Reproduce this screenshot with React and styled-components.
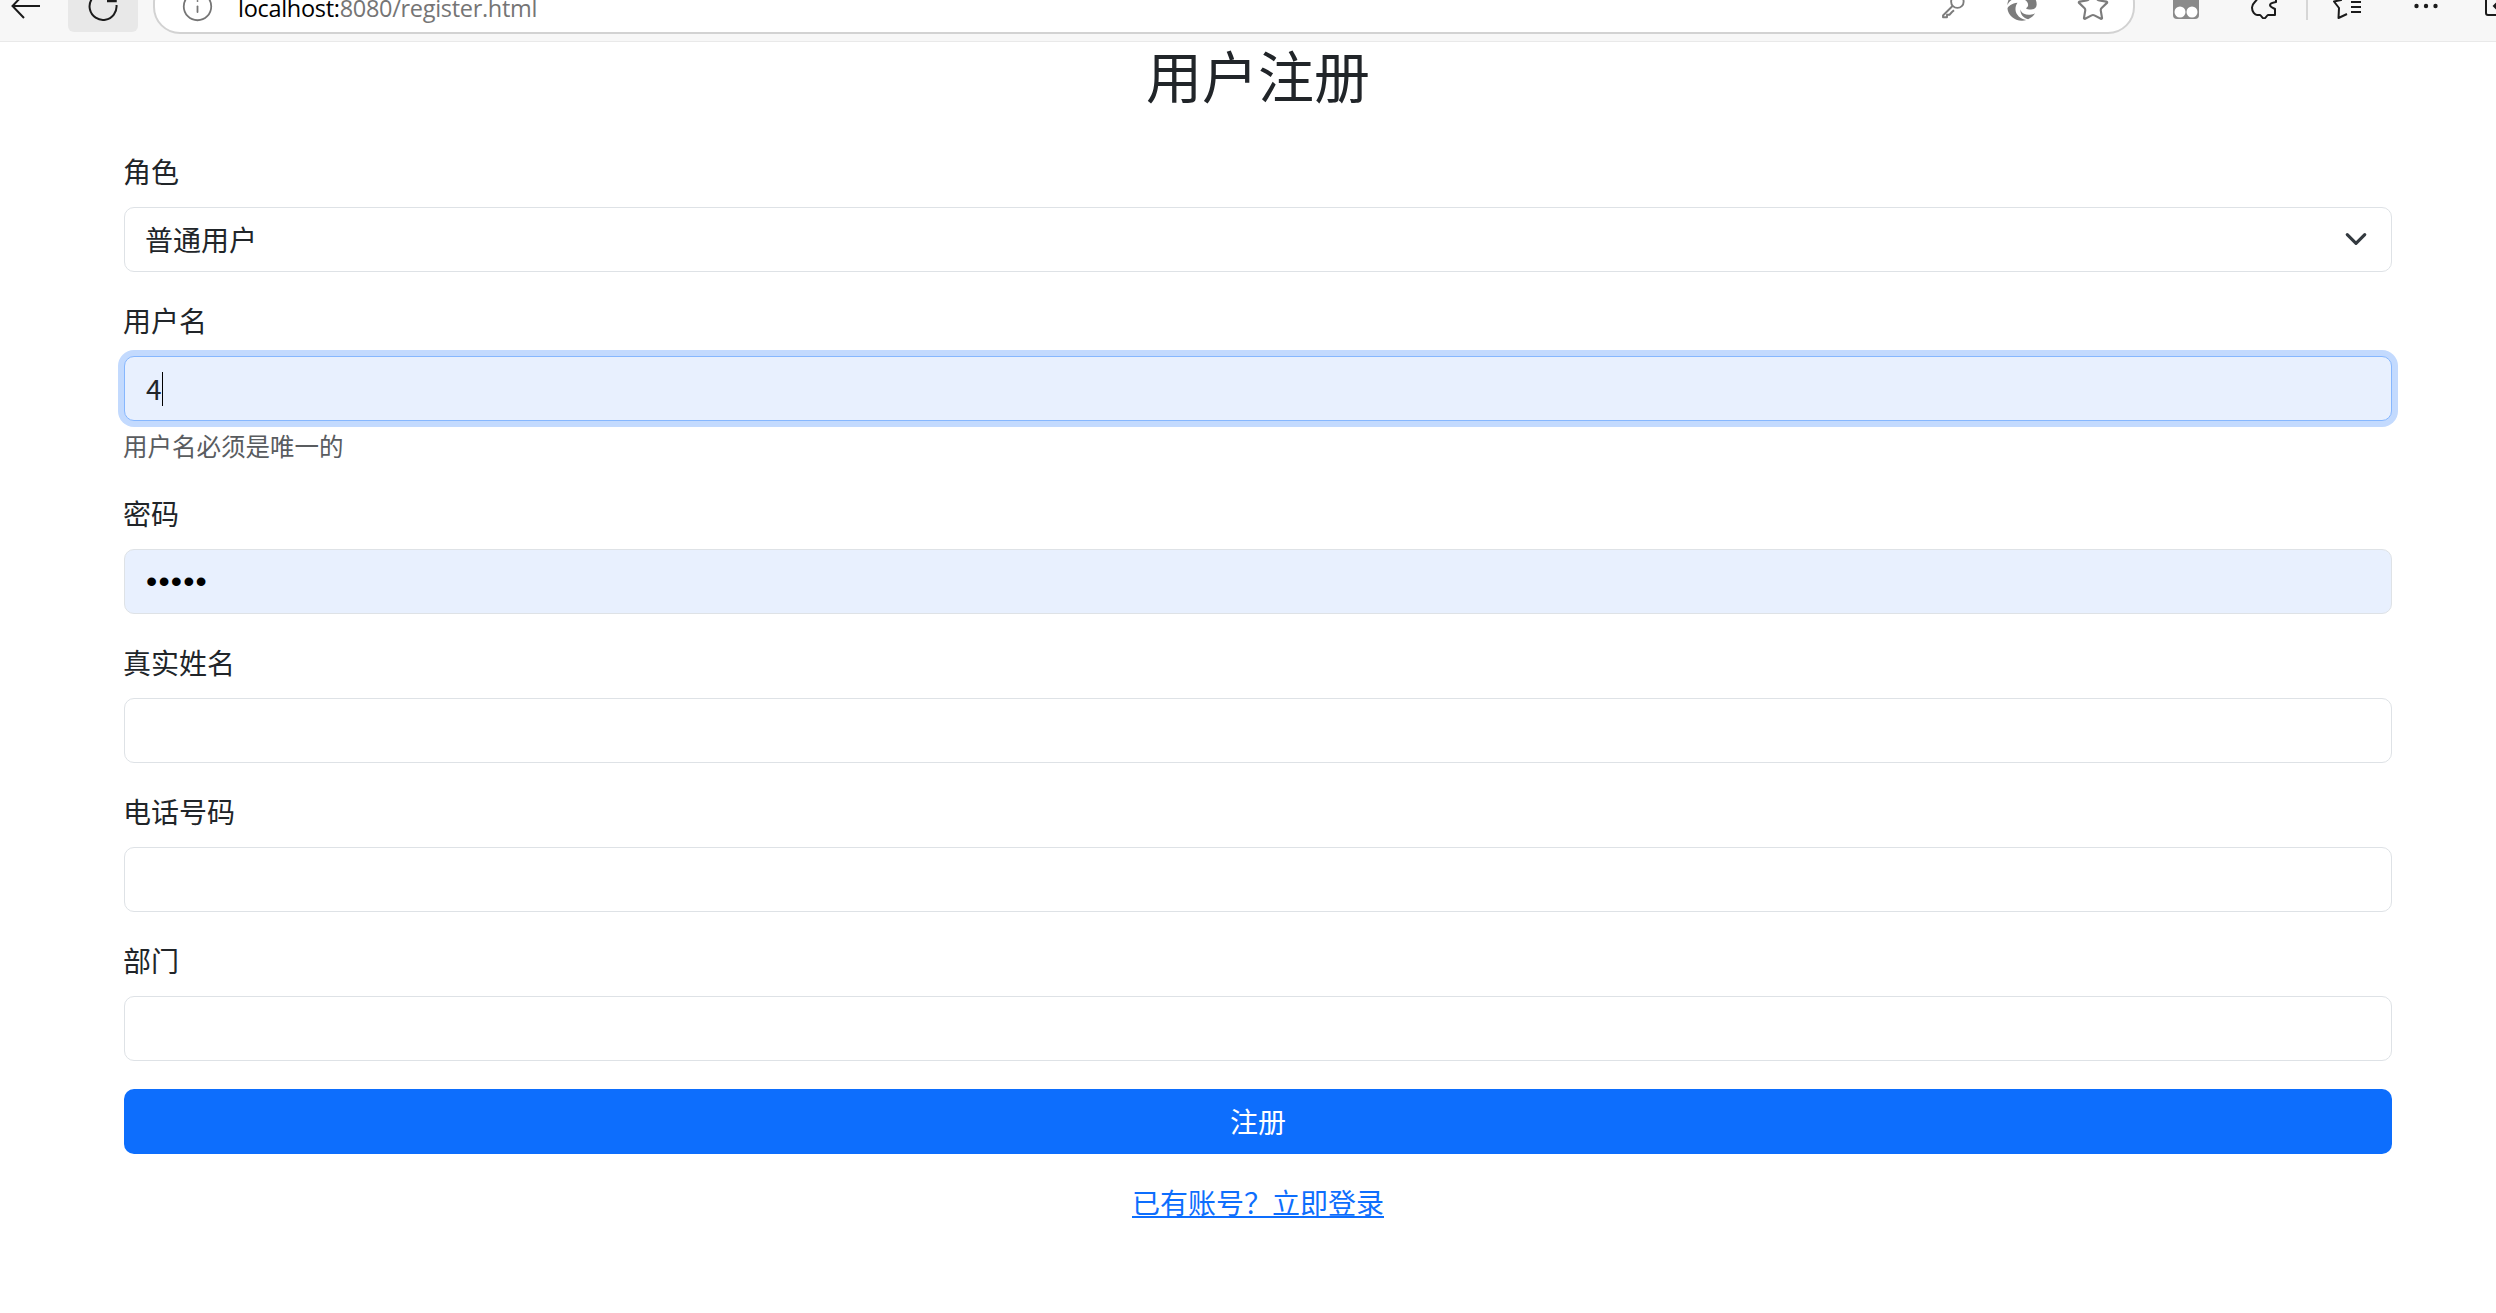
import React from 'react';
import styled, { createGlobalStyle } from 'styled-components';
import { Info, Star } from 'lucide-react';

const GlobalStyle = createGlobalStyle`
    html, body {
        margin: 0;
        padding: 0;
        background: #ffffff;
        color: #212529;
        font-family: 'Noto Sans CJK SC', 'Liberation Sans', sans-serif;
    }
`;

const Page = styled.div`
    width: 2496px;
    height: 1313px;
    overflow: hidden;
    background: #ffffff;
`;

/* browser chrome, cut off at the top of the capture */
const Toolbar = styled.header`
    height: 41px;
    box-sizing: content-box;
    background: #f7f7f7;
    border-bottom: 1px solid #e9e9e9;
    overflow: hidden;
`;
const ToolbarRow = styled.div`
    display: flex;
    align-items: center;
    height: 58px;
    margin-top: -24px;
    padding-left: 11px;
`;
const ToolButton = styled.div`
    flex: none;
    align-self: flex-start;
    display: flex;
    align-items: center;
    justify-content: center;
    box-sizing: border-box;
    width: ${(props) => props.$width || 70}px;
    height: 56px;
    padding-top: 4px;
    margin-left: ${(props) => props.$left || 0}px;
    border-radius: 6px;
    background: ${(props) => (props.$active ? '#e8e8e8' : 'transparent')};
    color: #1b1b1b;
`;
const AddressBar = styled.div`
    flex: none;
    display: flex;
    align-items: center;
    box-sizing: border-box;
    width: 1982px;
    height: 58px;
    margin-left: 15px;
    padding: 2px 23px 0 26px;
    background: #ffffff;
    border: 2px solid #d2d2d2;
    border-radius: 27px;
`;
const Url = styled.div`
    margin: 4px 0 0 24px;
    font-family: 'Open Sans', sans-serif;
    font-size: 23.5px;
    letter-spacing: -0.3px;
    white-space: nowrap;
    color: #757575;
    span {
        color: #000000;
    }
`;
const AddressIcons = styled.div`
    margin-left: auto;
    display: flex;
    align-items: center;
    gap: 38px;
    color: #7c7c7c;
`;
const Separator = styled.div`
    flex: none;
    width: 2px;
    height: 30px;
    margin-left: 7px;
    background: #d6d6d6;
`;

const Container = styled.main`
    padding: 0 104px 0 124px;
`;
const Title = styled.h2`
    margin: -2px 0 44px;
    font-size: 56px;
    line-height: 67px;
    font-weight: 400;
    text-align: center;
    color: #212529;
`;
const Group = styled.div`
    margin-bottom: 28px;
`;
const Label = styled.label`
    display: block;
    height: 42px;
    margin: 0 0 14px -1px;
    font-size: 28px;
    line-height: 40px;
`;
const Control = styled.input`
    display: block;
    box-sizing: border-box;
    width: 100%;
    height: 65px;
    padding: 0 21px 2px;
    font-family: inherit;
    font-size: 28px;
    color: #212529;
    background: ${(props) => (props.$filled ? '#e8f0fe' : '#ffffff')};
    border: 1.5px solid ${(props) => (props.$focused ? '#86b7fe' : '#dee2e6')};
    border-radius: 10px;
    outline: 0;
    box-shadow: ${(props) => (props.$focused ? '0 0 0 6px #c3dafe' : 'none')};
`;
const PasswordControl = styled(Control)`
    padding-bottom: 0;
    font-family: 'Liberation Sans', sans-serif;
    font-size: 32px;
    letter-spacing: 1.2px;
    color: #000000;
`;
const FieldWrap = styled.div`
    position: relative;
`;
const Caret = styled.span`
    position: absolute;
    left: 38px;
    top: 16px;
    width: 1px;
    height: 34px;
    background: #000000;
`;
const Select = styled.select`
    display: block;
    box-sizing: border-box;
    width: 100%;
    height: 65px;
    padding: 0 20px 2px;
    font-family: inherit;
    font-size: 28px;
    color: #212529;
    background: #ffffff;
    border: 1.5px solid #dee2e6;
    border-radius: 10px;
    outline: 0;
    appearance: none;
`;
const Chevron = styled.svg`
    position: absolute;
    right: 22px;
    top: 18px;
    width: 28px;
    height: 28px;
    pointer-events: none;
`;
const Hint = styled.div`
    height: 37px;
    margin: 7px 0 0 -1px;
    font-size: 24.5px;
    line-height: 35px;
    color: #595c5f;
`;
const Submit = styled.button`
    display: block;
    width: 100%;
    height: 65px;
    padding: 0 0 2px;
    font-family: inherit;
    font-size: 28px;
    color: #ffffff;
    background: #0d6efd;
    border: 0;
    border-radius: 10px;
`;
const LoginRow = styled.div`
    margin-top: 27px;
    text-align: center;
    font-size: 28px;
    line-height: 42px;
`;
const LoginLink = styled.a`
    color: #0d6efd;
    text-decoration: underline;
`;

function BackIcon() {
    return (
        <svg width="30" height="32" viewBox="0 0 30 32" fill="none" stroke="#1b1b1b" strokeWidth="2">
            <path d="M1.500 16H29M13 4 1.500 16 13 28" />
        </svg>
    );
}

function ReloadIcon() {
    return (
        <svg width="32" height="32" viewBox="0 0 32 32" fill="none" stroke="#1b1b1b" strokeWidth="2">
            <path d="M29.500 15A13.500 13.500 0 1 1 12 3.500" />
            <path d="M20 11h8.500V2" strokeWidth="2.500" />
        </svg>
    );
}

function KeyIcon() {
    return (
        <svg width="30" height="30" viewBox="0 0 24 24" fill="none" stroke="currentColor" strokeWidth="1.500">
            <circle cx="15.500" cy="8.500" r="5" />
            <path d="M11.800 11.800 4 19.600V21h3.200v-2h2l2-2.200 1.600-1.400" strokeLinejoin="round" />
        </svg>
    );
}

function EdgeIcon() {
    return (
        <svg width="32" height="32" viewBox="0 0 24 24" fill="#7c7c7c">
            <path d="M12 1C5.900 1 1.200 5.600 1 11.400c1.300-3.300 4.600-5.400 8.200-5.400 3.900 0 7.400 2.400 7.400 5.200 0 1-.6 1.800-1.600 2.400.9.800 2.400 1.200 3.800 1.100 2.300-.2 4.200-1.500 4.200-3.900C23 5.200 17.800 1 12 1Z" />
            <path d="M8.600 9.600C4.600 9.800 1.300 12.400 1.100 14c.5 4.600 4.900 9 10.900 9 1.100 0 2.200-.2 3.200-.5-4.100-.5-8.100-3.900-8.100-8 0-2 .5-3.600 1.500-4.900Z" />
            <path d="M21.800 17.400c-1.800 1.200-5.700 1.800-8.300.5-1.500-.8-2.300-1.800-2.700-3.200-.1 3.600 2.300 6.300 5.800 7.200 2.300-.8 4-2.400 5.200-4.500Z" />
        </svg>
    );
}

function CollectionsIcon() {
    return (
        <svg width="26" height="26" viewBox="0 0 26 26">
            <rect width="26" height="26" rx="4" fill="#8a8a8a" />
            <circle cx="7" cy="19" r="5.500" fill="#ffffff" />
            <circle cx="19" cy="19" r="5.500" fill="#ffffff" />
        </svg>
    );
}

function ExtensionIcon() {
    return (
        <svg width="26" height="26" viewBox="0 0 26 26" fill="none" stroke="#1b1b1b" strokeWidth="2" strokeLinejoin="round">
            <path d="M6 0v6c0 2-5 4-5 8.500S4 22 6 22h3c1 0 2 3.500 4 3.500s3-3.500 4-3.500h7v-6c-2-1-5-2-5-4s3-2.500 6-3V0" />
        </svg>
    );
}

function FavouritesIcon() {
    return (
        <svg width="30" height="26" viewBox="0 0 30 26" fill="none" stroke="#1b1b1b" strokeWidth="2">
            <path d="M11 0 8 7 1 8.500 6 15l-.5 10 8.500-4" strokeLinejoin="round" />
            <path d="M18 9h10M18 14h10M18 19h10" />
        </svg>
    );
}

function DotsIcon() {
    return (
        <svg width="24" height="6" viewBox="0 0 24 6" fill="#1b1b1b">
            <circle cx="2.500" cy="3" r="2.200" />
            <circle cx="12" cy="3" r="2.200" />
            <circle cx="21.500" cy="3" r="2.200" />
        </svg>
    );
}

function SidebarIcon() {
    return (
        <svg width="30" height="34" viewBox="0 0 30 34" fill="none" stroke="#1b1b1b" strokeWidth="2">
            <path d="M3 0v24a2 2 0 0 0 2 2h24" />
            <path d="M24 17H11m5-5-5 5 5 5" />
        </svg>
    );
}

function Field({ label, ...rest }) {
    return (
        <Group>
            <Label>{label}</Label>
            <Control readOnly {...rest} />
        </Group>
    );
}

function App() {
    return (
        <Page>
            <GlobalStyle />
            <Toolbar>
                <ToolbarRow>
                    <ToolButton $width={30}>
                        <BackIcon />
                    </ToolButton>
                    <ToolButton $left={27} $active>
                        <ReloadIcon />
                    </ToolButton>
                    <AddressBar>
                        <Info size={33} strokeWidth={1.3} color="#757575" />
                        <Url>
                            <span>localhost:</span>8080/register.html
                        </Url>
                        <AddressIcons>
                            <KeyIcon />
                            <EdgeIcon />
                            <Star size={34} strokeWidth={1.5} />
                        </AddressIcons>
                    </AddressBar>
                    <ToolButton $left={16}>
                        <CollectionsIcon />
                    </ToolButton>
                    <ToolButton $left={8}>
                        <ExtensionIcon />
                    </ToolButton>
                    <Separator />
                    <ToolButton $left={5}>
                        <FavouritesIcon />
                    </ToolButton>
                    <ToolButton $left={8}>
                        <DotsIcon />
                    </ToolButton>
                    <ToolButton $left={17} $width={40}>
                        <SidebarIcon />
                    </ToolButton>
                </ToolbarRow>
            </Toolbar>
            <Container>
                <Title>用户注册</Title>
                <Group>
                    <Label>角色</Label>
                    <FieldWrap>
                        <Select defaultValue="user">
                            <option value="user">普通用户</option>
                        </Select>
                        <Chevron viewBox="0 0 16 16" fill="none" stroke="#343a40" strokeWidth="1.800" strokeLinecap="round" strokeLinejoin="round">
                            <path d="m3 5.500 5 5 5-5" />
                        </Chevron>
                    </FieldWrap>
                </Group>
                <Group>
                    <Label>用户名</Label>
                    <FieldWrap>
                        <Control readOnly $filled $focused value="4" />
                        <Caret />
                    </FieldWrap>
                    <Hint>用户名必须是唯一的</Hint>
                </Group>
                <Group>
                    <Label>密码</Label>
                    <PasswordControl readOnly $filled type="password" value="12345" />
                </Group>
                <Field label="真实姓名" />
                <Field label="电话号码" />
                <Field label="部门" />
                <Submit type="button">注册</Submit>
                <LoginRow>
                    <LoginLink href="#login">已有账号？立即登录</LoginLink>
                </LoginRow>
            </Container>
        </Page>
    );
}

export default App;
